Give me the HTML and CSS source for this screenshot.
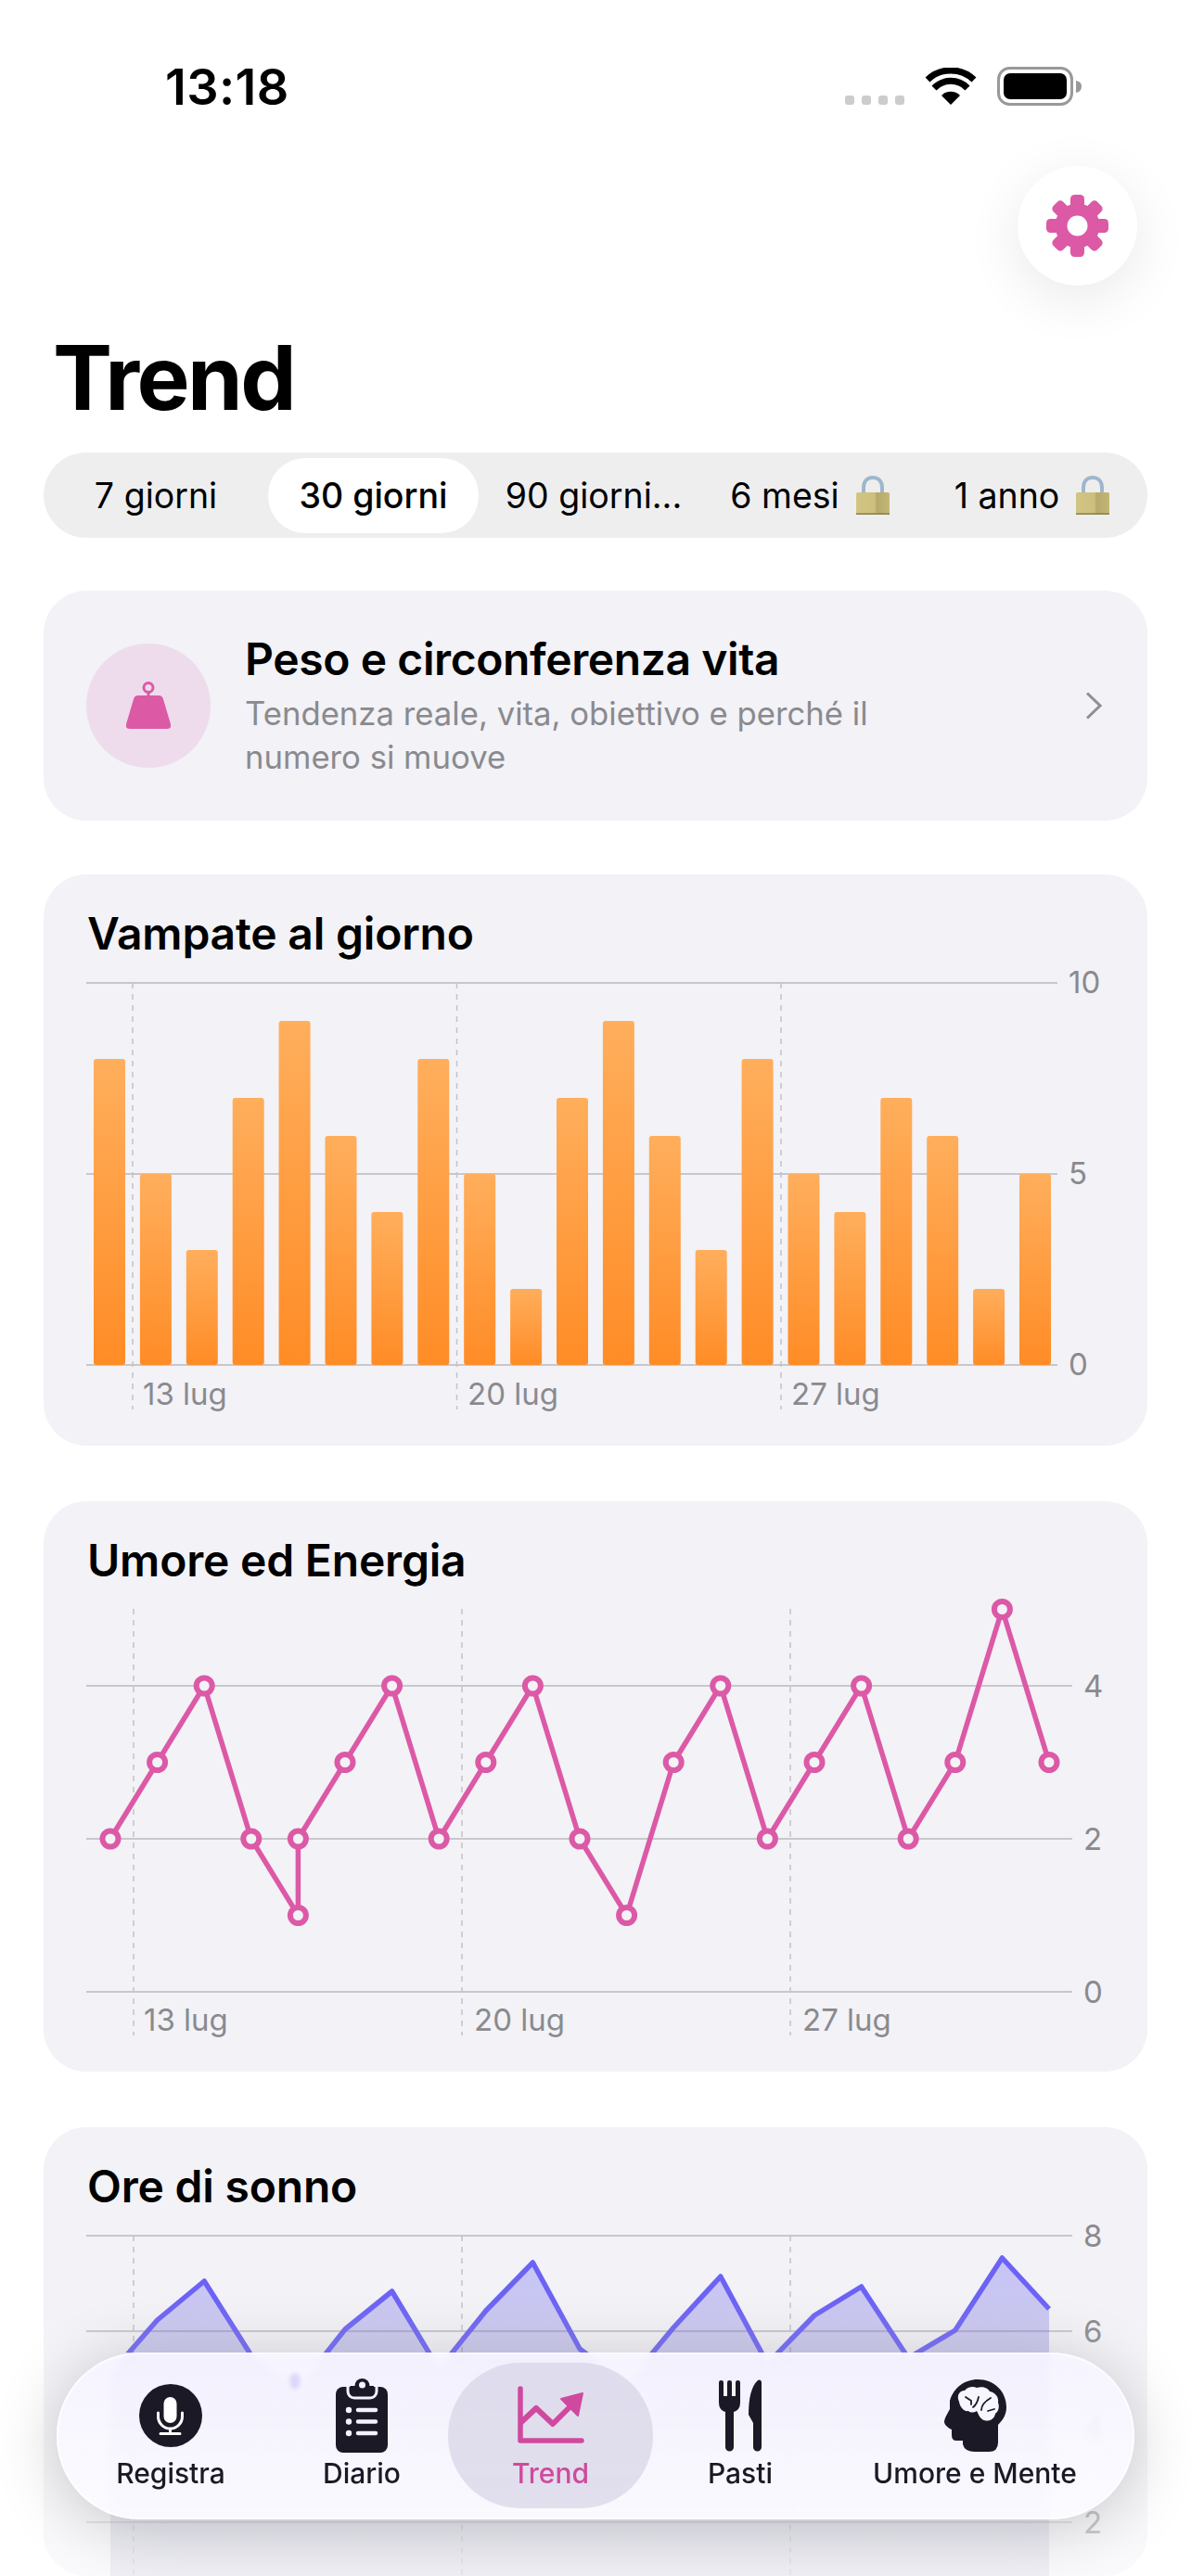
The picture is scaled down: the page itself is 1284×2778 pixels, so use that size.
FILE: index.html
```html
<!DOCTYPE html>
<html lang="it">
<head>
    <meta charset="UTF-8">
    <meta name="viewport" content="width=device-width, initial-scale=1.0">
    <title>Trend</title>
    <link rel="stylesheet" href="styles.css">
</head>
<body>
<div class="screen">
    <div class="status-bar">
        <span class="clock">13:18</span>
        <div class="status-icons">
            <div class="signal"><i></i><i></i><i></i><i></i></div>
            <svg class="wifi" viewBox="0 0 56 40">
                <path d="M28 40 L18 30 A14 14 0 0 1 38 30 Z" fill="#000"/>
                <path d="M10 22 A25 25 0 0 1 46 22" fill="none" stroke="#000" stroke-width="7"/>
                <path d="M3 13 A36 36 0 0 1 53 13" fill="none" stroke="#000" stroke-width="7"/>
            </svg>
            <svg class="battery" viewBox="0 0 92 42">
                <rect x="1.5" y="1.5" width="79" height="39" rx="12" fill="#fff" stroke="#999" stroke-width="3"/>
                <rect x="7" y="7" width="68" height="28" rx="7" fill="#000"/>
                <path d="M85 15 Q91 16 91 21 Q91 27 85 28 Z" fill="#999"/>
            </svg>
        </div>
    </div>

    <div class="top-row">
        <button class="settings-btn">
            <svg viewBox="0 0 67 67" width="67" height="67">
                <g fill="#dc59a6">
                    <circle cx="33.5" cy="33.5" r="24"/>
                    <rect x="26" y="0" width="15" height="67" rx="4.5"/>
                    <rect x="26" y="0" width="15" height="67" rx="4.5" transform="rotate(45 33.5 33.5)"/>
                    <rect x="26" y="0" width="15" height="67" rx="4.5" transform="rotate(90 33.5 33.5)"/>
                    <rect x="26" y="0" width="15" height="67" rx="4.5" transform="rotate(135 33.5 33.5)"/>
                </g>
                <circle cx="33.5" cy="33.5" r="11" fill="#fff"/>
            </svg>
        </button>
    </div>

    <h1 class="page-title">Trend</h1>

    <div class="range-picker">
        <div class="range-item">7 giorni</div>
        <div class="range-item active">30 giorni</div>
        <div class="range-item">90 giorni...</div>
        <div class="range-item">6 mesi
            <svg class="lock" viewBox="0 0 36 42">
                <defs>
                    <linearGradient id="lockBody" x1="0" x2="1" y1="0" y2="0">
                        <stop offset="0" stop-color="#d2c584"/>
                        <stop offset="0.55" stop-color="#cdbf7c"/>
                        <stop offset="0.62" stop-color="#b5a96c"/>
                        <stop offset="1" stop-color="#c4b774"/>
                    </linearGradient>
                </defs>
                <path d="M8 19 V13 C8 6 12 2 18 2 C24 2 28 6 28 13 V19" fill="none" stroke="#9fb6cc" stroke-width="4"/>
                <rect x="0" y="18" width="36" height="24" rx="1.5" fill="url(#lockBody)"/>
                <rect x="0" y="40.5" width="36" height="1.5" fill="#8a7d45"/>
            </svg>
        </div>
        <div class="range-item last">1 anno
            <svg class="lock" viewBox="0 0 36 42">
                <path d="M8 19 V13 C8 6 12 2 18 2 C24 2 28 6 28 13 V19" fill="none" stroke="#9fb6cc" stroke-width="4"/>
                <rect x="0" y="18" width="36" height="24" rx="1.5" fill="url(#lockBody)"/>
                <rect x="0" y="40.5" width="36" height="1.5" fill="#8a7d45"/>
            </svg>
        </div>
    </div>

    <div class="card link-card">
        <div class="link-icon">
            <svg viewBox="0 0 48 52" width="48" height="52">
                <circle cx="24" cy="6.5" r="5" fill="none" stroke="#dc59a6" stroke-width="3"/>
                <rect x="22.5" y="10" width="3" height="6" fill="#dc59a6"/>
                <path d="M13 15 H35 Q39 15 40 19 L48 46 Q49 51 44 51 H4 Q-1 51 0 46 L8 19 Q9 15 13 15 Z" fill="#dc59a6"/>
            </svg>
        </div>
        <div class="link-text">
            <div class="link-title">Peso e circonferenza vita</div>
            <div class="link-sub">Tendenza reale, vita, obiettivo e perché il numero si muove</div>
        </div>
        <svg class="chevron" viewBox="0 0 18 30" width="18" height="30">
            <path d="M2 1.5 L16 15 L2 28.5" fill="none" stroke="#8e8e93" stroke-width="3"/>
        </svg>
    </div>

    <div class="card chart-card">
        <h2 class="chart-title">Vampate al giorno</h2>
        <svg class="chart" viewBox="47 1035 1190 524" width="1190" height="524">
            <defs>
                <linearGradient id="barFill" x1="0" x2="0" y1="0" y2="1">
                    <stop offset="0" stop-color="#ffae5c"/>
                    <stop offset="1" stop-color="#ff8c26"/>
                </linearGradient>
            </defs>
            <line class="grid" x1="93" x2="1140" y1="1060" y2="1060"/>
            <line class="grid" x1="93" x2="1140" y1="1266" y2="1266"/>
            <line class="grid" x1="93" x2="1140" y1="1472" y2="1472"/>
            <line class="tick" x1="143" x2="143" y1="1060" y2="1520"/>
            <line class="tick" x1="492.5" x2="492.5" y1="1060" y2="1520"/>
            <line class="tick" x1="842" x2="842" y1="1060" y2="1520"/>
            <g fill="url(#barFill)">
                <rect class="bar" x="101" y="1142" width="34" height="330"/>
                <rect class="bar" x="150.9" y="1266" width="34" height="206"/>
                <rect class="bar" x="200.8" y="1348" width="34" height="124"/>
                <rect class="bar" x="250.7" y="1184" width="34" height="288"/>
                <rect class="bar" x="300.6" y="1101" width="34" height="371"/>
                <rect class="bar" x="350.5" y="1225" width="34" height="247"/>
                <rect class="bar" x="400.4" y="1307" width="34" height="165"/>
                <rect class="bar" x="450.3" y="1142" width="34" height="330"/>
                <rect class="bar" x="500.2" y="1266" width="34" height="206"/>
                <rect class="bar" x="550.1" y="1390" width="34" height="82"/>
                <rect class="bar" x="600" y="1184" width="34" height="288"/>
                <rect class="bar" x="649.9" y="1101" width="34" height="371"/>
                <rect class="bar" x="699.8" y="1225" width="34" height="247"/>
                <rect class="bar" x="749.7" y="1348" width="34" height="124"/>
                <rect class="bar" x="799.6" y="1142" width="34" height="330"/>
                <rect class="bar" x="849.5" y="1266" width="34" height="206"/>
                <rect class="bar" x="899.4" y="1307" width="34" height="165"/>
                <rect class="bar" x="949.3" y="1184" width="34" height="288"/>
                <rect class="bar" x="999.2" y="1225" width="34" height="247"/>
                <rect class="bar" x="1049.1" y="1390" width="34" height="82"/>
                <rect class="bar" x="1099" y="1266" width="34" height="206"/>
            </g>
            <text class="axis" x="1152" y="1071">10</text>
            <text class="axis" x="1152" y="1277">5</text>
            <text class="axis" x="1152" y="1483">0</text>
            <text class="axis" x="154" y="1515">13 lug</text>
            <text class="axis" x="504" y="1515">20 lug</text>
            <text class="axis" x="853" y="1515">27 lug</text>
        </svg>
    </div>

    <div class="card chart-card">
        <h2 class="chart-title">Umore ed Energia</h2>
        <svg class="chart" viewBox="47 1711 1190 523" width="1190" height="523">
            <line class="grid" x1="93" x2="1156" y1="1818" y2="1818"/>
            <line class="grid" x1="93" x2="1156" y1="1983" y2="1983"/>
            <line class="grid" x1="93" x2="1156" y1="2148" y2="2148"/>
            <line class="tick" x1="144" x2="144" y1="1735" y2="2195"/>
            <line class="tick" x1="498" x2="498" y1="1735" y2="2195"/>
            <line class="tick" x1="852" x2="852" y1="1735" y2="2195"/>
            <polyline class="mood-line" points="119,1983 169.6,1900.5 220.2,1818 270.8,1983 321.4,2065.5 321.4,1983 372,1900.5 422.6,1818 473.2,1983 523.8,1900.5 574.4,1818 625,1983 675.6,2065.5 726.2,1900.5 776.8,1818 827.4,1983 878,1900.5 928.6,1818 979.2,1983 1029.8,1900.5 1080.4,1735.5 1131,1900.5"/>
            <g class="mood-dots">
                <circle cx="119" cy="1983" r="8.5"/>
                <circle cx="169.6" cy="1900.5" r="8.5"/>
                <circle cx="220.2" cy="1818" r="8.5"/>
                <circle cx="270.8" cy="1983" r="8.5"/>
                <circle cx="321.4" cy="2065.5" r="8.5"/>
                <circle cx="321.4" cy="1983" r="8.5"/>
                <circle cx="372" cy="1900.5" r="8.5"/>
                <circle cx="422.6" cy="1818" r="8.5"/>
                <circle cx="473.2" cy="1983" r="8.5"/>
                <circle cx="523.8" cy="1900.5" r="8.5"/>
                <circle cx="574.4" cy="1818" r="8.5"/>
                <circle cx="625" cy="1983" r="8.5"/>
                <circle cx="675.6" cy="2065.5" r="8.5"/>
                <circle cx="726.2" cy="1900.5" r="8.5"/>
                <circle cx="776.8" cy="1818" r="8.5"/>
                <circle cx="827.4" cy="1983" r="8.5"/>
                <circle cx="878" cy="1900.5" r="8.5"/>
                <circle cx="928.6" cy="1818" r="8.5"/>
                <circle cx="979.2" cy="1983" r="8.5"/>
                <circle cx="1029.8" cy="1900.5" r="8.5"/>
                <circle cx="1080.4" cy="1735.5" r="8.5"/>
                <circle cx="1131" cy="1900.5" r="8.5"/>
            </g>
            <text class="axis" x="1168" y="1830">4</text>
            <text class="axis" x="1168" y="1995">2</text>
            <text class="axis" x="1168" y="2160">0</text>
            <text class="axis" x="155" y="2190">13 lug</text>
            <text class="axis" x="511" y="2190">20 lug</text>
            <text class="axis" x="865" y="2190">27 lug</text>
        </svg>
    </div>

    <div class="card chart-card">
        <h2 class="chart-title">Ore di sonno</h2>
        <svg class="chart" viewBox="47 2386 1190 392" width="1190" height="392">
            <defs>
                <linearGradient id="sleepFill" gradientUnits="userSpaceOnUse" x1="0" x2="0" y1="2430" y2="2778">
                    <stop offset="0" stop-color="#6c63f5" stop-opacity="0.32"/>
                    <stop offset="1" stop-color="#5a5890" stop-opacity="0.2"/>
                </linearGradient>
                <!-- the line stops at the tab bar, only the area shows through it -->
                <clipPath id="aboveTabs">
                    <rect x="47" y="2386" width="1190" height="151"/>
                </clipPath>
            </defs>
            <line class="grid" x1="93" x2="1156" y1="2411" y2="2411"/>
            <line class="grid" x1="93" x2="1156" y1="2514" y2="2514"/>
            <line class="grid" x1="93" x2="1156" y1="2617" y2="2617"/>
            <line class="grid" x1="93" x2="1156" y1="2720" y2="2720"/>
            <line class="tick" x1="144" x2="144" y1="2411" y2="2778"/>
            <line class="tick" x1="498" x2="498" y1="2411" y2="2778"/>
            <line class="tick" x1="852" x2="852" y1="2411" y2="2778"/>
            <polygon class="sleep-area" points="119,2778 119,2560 169.6,2502 220.2,2460 270.8,2540 321.4,2576 372,2512 422.6,2471 473.2,2555 523.8,2492 574.4,2440 625,2533 675.6,2571 726.2,2510 776.8,2455 827.4,2549 878,2497 928.6,2466 979.2,2543 1029.8,2513 1080.4,2435 1131,2490 1131,2778"/>
            <polyline class="sleep-line" clip-path="url(#aboveTabs)" points="119,2560 169.6,2502 220.2,2460 270.8,2540 321.4,2576 372,2512 422.6,2471 473.2,2555 523.8,2492 574.4,2440 625,2533 675.6,2571 726.2,2510 776.8,2455 827.4,2549 878,2497 928.6,2466 979.2,2543 1029.8,2513 1080.4,2435 1131,2490"/>
            <text class="axis" x="1168" y="2423">8</text>
            <text class="axis" x="1168" y="2526">6</text>
            <text class="axis" x="1168" y="2629">4</text>
            <text class="axis" x="1168" y="2732">2</text>
        </svg>
    </div>

    <div class="bottom-fade"></div>

    <nav class="tab-bar">
        <div class="tab">
            <div class="tab-icon">
                <svg viewBox="0 0 68 68" width="68" height="68">
                    <circle cx="34" cy="34" r="34" fill="#1a1925"/>
                    <rect x="26.5" y="14" width="14" height="28" rx="7" fill="#fff"/>
                    <path d="M20.5 31 V35 A13 13 0 0 0 46.5 35 V31 M33.5 48 V53 M23 53.5 H44" fill="none" stroke="#fff" stroke-width="3" stroke-linecap="round"/>
                </svg>
            </div>
            <span>Registra</span>
        </div>
        <div class="tab">
            <div class="tab-icon">
                <svg viewBox="0 0 56 80" width="56" height="80">
                    <rect x="0" y="9" width="56" height="71" rx="8" fill="#1a1925"/>
                    <path d="M13 9 V14 A7 7 0 0 0 20 21 H37 A7 7 0 0 0 44 14 V9" fill="none" stroke="#f4f2fd" stroke-width="3"/>
                    <circle cx="28.5" cy="8" r="8" fill="#1a1925"/>
                    <path d="M15.5 8 H41 V16 H15.5 Z" fill="#1a1925"/>
                    <circle cx="28.5" cy="7" r="3.5" fill="#f4f2fd"/>
                    <path d="M24 34 H43 M24 46.5 H43 M24 59 H43" stroke="#f4f2fd" stroke-width="4.5" stroke-linecap="round"/>
                    <circle cx="14" cy="34" r="3.2" fill="#f4f2fd"/>
                    <circle cx="14" cy="46.5" r="3.2" fill="#f4f2fd"/>
                    <circle cx="14" cy="59" r="3.2" fill="#f4f2fd"/>
                </svg>
            </div>
            <span>Diario</span>
        </div>
        <div class="tab active">
            <div class="tab-icon">
                <svg viewBox="0 0 72 64" width="72" height="64">
                    <path d="M3 3 V59 H69" fill="none" stroke="#cf4a9e" stroke-width="5.5" stroke-linecap="round" stroke-linejoin="round"/>
                    <path d="M3 40 L20 24 L38 41 L58 21" fill="none" stroke="#cf4a9e" stroke-width="6" stroke-linejoin="round"/>
                    <path d="M70 8 L47 14 L65 32 Z" fill="#cf4a9e" stroke="#cf4a9e" stroke-width="2" stroke-linejoin="round"/>
                </svg>
            </div>
            <span>Trend</span>
        </div>
        <div class="tab">
            <div class="tab-icon">
                <svg viewBox="0 0 46 78" width="46" height="78">
                    <g fill="#1a1925">
                        <rect x="0" y="1" width="5" height="24" rx="2.3"/>
                        <rect x="9" y="1" width="5" height="24" rx="2.3"/>
                        <rect x="18" y="1" width="5" height="24" rx="2.3"/>
                        <path d="M0 18 H23 V25 Q23 33 16 35 V73 A4.5 4.5 0 0 1 7 73 V35 Q0 33 0 25 Z"/>
                        <path d="M46 3 A2.5 2.5 0 0 0 42 1 Q32 10 32 38 L37 47 V73 A4.5 4.5 0 0 0 46 73 Z"/>
                    </g>
                </svg>
            </div>
            <span>Pasti</span>
        </div>
        <div class="tab">
            <div class="tab-icon">
                <svg viewBox="0 0 67 78" width="67" height="78">
                    <path d="M6 23 C10 9 22 0 36 0 C54 0 67 13 67 30 C67 38 63 44 58 49 V68 Q58 78 48 78 H33 Q22 78 20 70 V66 H13 Q8 66 8 60 V54 C3 52 0 48 0 46 C0 42 4 36 6 32 Z" fill="#1a1925"/>
                    <path d="M16 24 C13 18 16 12 22 12 C25 8 31 7 35 9 C41 7 47 9 49 13 C55 14 59 19 58 25 C60 30 58 35 55 37 C54 43 48 46 43 44 C39 43 37 38 35 34 C32 36 28 36 26 34 C21 35 17 30 16 24 Z" fill="#f7f6fe"/>
                    <path d="M23 19 L29 23 V27 M37 19 C36 24 35 27 31 30 M50 20 C45 23 40 28 40 33 M47 34 L54 32" fill="none" stroke="#1a1925" stroke-width="1.8" stroke-linecap="round"/>
                </svg>
            </div>
            <span>Umore e Mente</span>
        </div>
    </nav>
</div>
</body>
</html>
```

FILE: styles.css
```css
body {
    margin: 0;
    background: #fff;
    color: #000;
    font-family: Inter, "Liberation Sans", sans-serif;
}
.screen {
    position: relative;
    width: 1284px;
    height: 2778px;
    overflow: hidden;
}

/* Status bar */
.status-bar {
    display: flex;
    justify-content: space-between;
    align-items: flex-end;
    height: 121px;
    padding: 0 118px 0 178px;
    box-sizing: border-box;
}
.clock {
    font-size: 54px;
    font-weight: 600;
    line-height: 54px;
    letter-spacing: 0.4px;
}
.status-icons {
    display: flex;
    align-items: flex-end;
    gap: 22px;
    padding-bottom: 7px;
}
.signal {
    display: flex;
    gap: 7.5px;
    padding-bottom: 1px;
}
.signal i {
    width: 10.5px;
    height: 10.5px;
    border-radius: 3px;
    background: #ccc;
}
.wifi {
    width: 56px;
    height: 40px;
    margin-bottom: 1px;
}
.battery {
    width: 92px;
    height: 42px;
    margin-right: -1px;
}

/* Header */
.top-row {
    display: flex;
    justify-content: flex-end;
    margin-top: 58px;
    padding-right: 58px;
}
.settings-btn {
    display: flex;
    align-items: center;
    justify-content: center;
    width: 129px;
    height: 129px;
    padding: 0;
    border: none;
    border-radius: 50%;
    background: #fff;
    box-shadow: 0 14px 60px rgba(0, 0, 0, 0.09);
}
.page-title {
    margin: 49px 0 31px;
    padding-left: 57px;
    font-size: 96px;
    font-weight: 700;
    line-height: 100px;
    letter-spacing: -2.5px;
}

/* Range picker */
.range-picker {
    display: grid;
    grid-template-columns: 242px 227px 248px 218px 1fr;
    align-items: stretch;
    height: 92px;
    margin: 0 47px 57px;
    border-radius: 46px;
    background: #eeeeef;
}
.range-item {
    display: flex;
    align-items: center;
    justify-content: center;
    gap: 18px;
    font-size: 37.5px;
    white-space: nowrap;
}
.range-item.active {
    margin: 6px 0 5px;
    border-radius: 40px;
    background: #fff;
    font-weight: 500;
}
.range-item.last {
    padding-left: 6px;
}
.lock {
    width: 36px;
    height: 42px;
    flex: none;
}

/* Cards */
.card {
    margin: 0 47px;
    border-radius: 46px;
    background: #f2f2f7;
}
.link-card {
    display: flex;
    align-items: center;
    height: 248px;
    margin-bottom: 58px;
    padding: 0 49px 0 46px;
    box-sizing: border-box;
}
.link-icon {
    display: flex;
    align-items: center;
    justify-content: center;
    flex: none;
    width: 134px;
    height: 134px;
    margin-right: 37px;
    border-radius: 50%;
    background: #eedcec;
}
.link-text {
    flex: 1;
}
.link-title {
    font-size: 48px;
    font-weight: 600;
    line-height: 56px;
    letter-spacing: -0.4px;
}
.link-sub {
    max-width: 720px;
    margin-top: 7px;
    color: #8a8a8e;
    font-size: 34.7px;
    line-height: 47px;
}
.chart-card {
    margin-bottom: 60px;
    padding-top: 36px;
}
.chart-title {
    margin: 0;
    padding-left: 47px;
    font-size: 48px;
    font-weight: 600;
    line-height: 56px;
    letter-spacing: -0.2px;
}
.chart {
    display: block;
}

/* Chart parts */
.grid {
    stroke: #c7c7cc;
    stroke-width: 2;
}
.tick {
    stroke: #c4c4c8;
    stroke-width: 1.5;
    stroke-dasharray: 6 6;
}
.axis {
    fill: #8a8a8e;
    font-size: 33px;
}
.bar {
    rx: 3px;
}
.mood-line {
    fill: none;
    stroke: #dc59a6;
    stroke-width: 5.5;
    stroke-linejoin: round;
}
.mood-dots circle {
    fill: #f2f2f7;
    stroke: #dc59a6;
    stroke-width: 6;
}
.sleep-area {
    fill: url(#sleepFill);
}
.sleep-line {
    fill: none;
    stroke: #6c63f5;
    stroke-width: 5.5;
    stroke-linejoin: round;
}

/* Floating tab bar */
.bottom-fade {
    position: absolute;
    left: 0;
    right: 0;
    bottom: 0;
    height: 300px;
    background: linear-gradient(rgba(255, 255, 255, 0), rgba(255, 255, 255, 0.65));
}
.tab-bar {
    position: absolute;
    left: 61px;
    top: 2537px;
    display: grid;
    grid-template-columns: 234px 178px 225px 188px 1fr;
    box-sizing: border-box;
    width: 1162px;
    height: 180px;
    padding: 11px 13px 12px 6px;
    border-radius: 90px;
    background: linear-gradient(rgba(246, 244, 255, 0.88), rgba(251, 250, 255, 0.93));
    box-shadow: 0 8px 70px rgba(0, 0, 0, 0.2), inset 0 0 0 2px rgba(255, 255, 255, 0.6);
    backdrop-filter: blur(3px);
}
.tab-bar::before {
    content: "";
    position: absolute;
    left: 251px;
    top: 22px;
    width: 12px;
    height: 18px;
    border-radius: 50%;
    background: #dcd8fa;
    filter: blur(2px);
}
.tab {
    display: flex;
    flex-direction: column;
    align-items: center;
    padding-top: 13px;
    color: #1a1925;
    font-size: 30px;
    font-weight: 500;
    line-height: 34px;
}
.tab.active {
    margin-left: 4px;
    border-radius: 78px;
    background: rgba(205, 203, 222, 0.55);
    color: #cf4a9e;
}
.tab-icon {
    display: flex;
    align-items: center;
    justify-content: center;
    height: 88px;
    margin-bottom: 1px;
}
```
